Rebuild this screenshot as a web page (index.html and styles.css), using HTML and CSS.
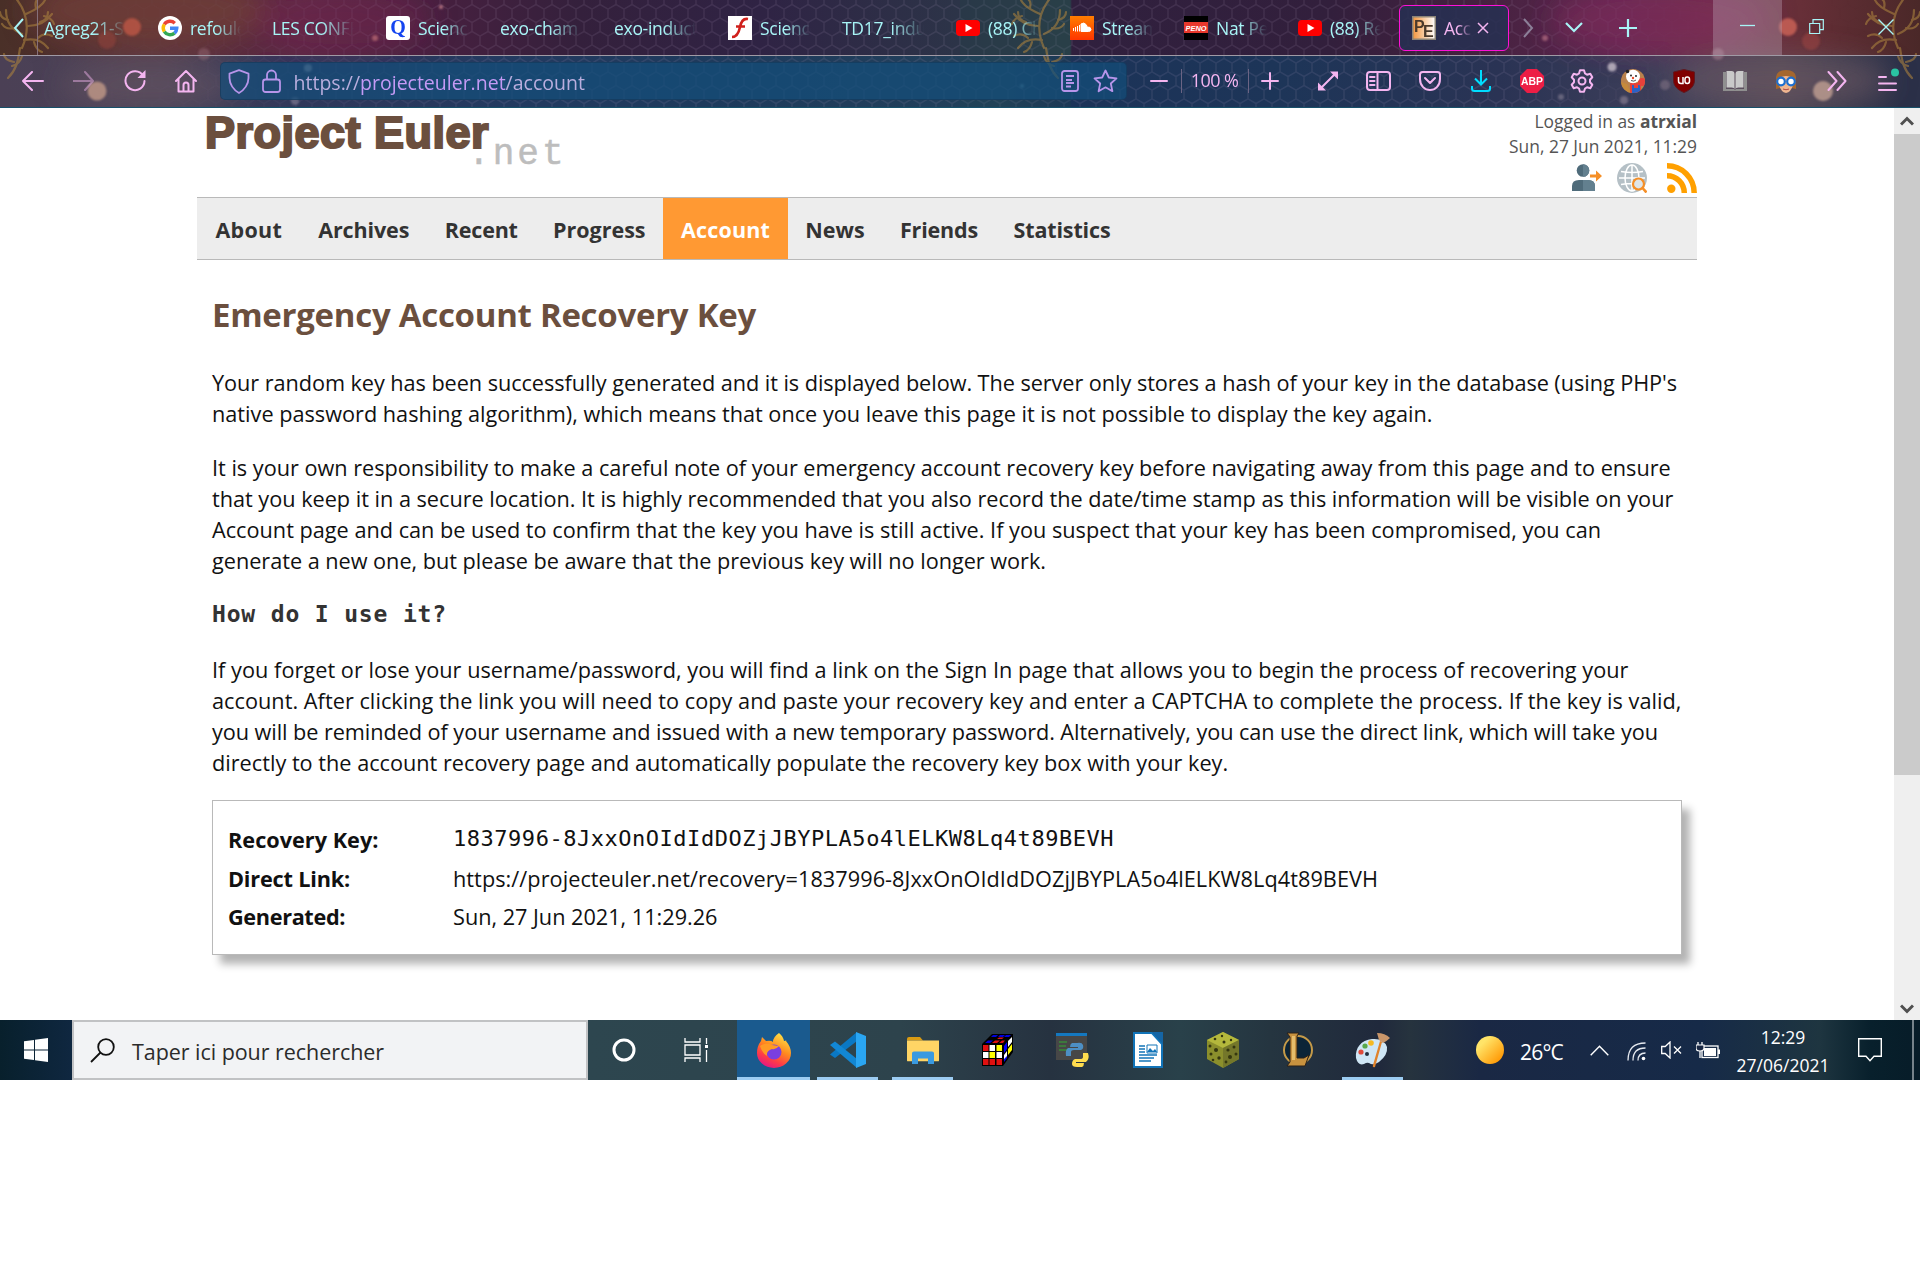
FILE: index.html
```html
<!DOCTYPE html>
<html lang="fr">
<head>
<meta charset="utf-8">
<title>Account - Project Euler</title>
<link rel="stylesheet" href="styles.css">
</head>
<body>
<header class="chrome">
  <svg class="theme" width="1920" height="108" viewBox="0 0 1920 108" aria-hidden="true">
    <defs>
      <pattern id="hex" width="16" height="27" patternUnits="userSpaceOnUse">
        <path d="M8 0v4.500l8 4.500v9l-8 4.500V27M8 4.500L0 9v9l8 4.500" fill="none" stroke="#b9a5c8" stroke-width="1.500"/>
      </pattern>
      <linearGradient id="fadeHex"><stop offset="0" stop-color="#000"/><stop offset=".1" stop-color="#333"/><stop offset=".25" stop-color="#fff"/><stop offset=".78" stop-color="#fff"/><stop offset=".87" stop-color="#222"/><stop offset="1" stop-color="#000"/></linearGradient>
      <mask id="hexMask"><rect width="1920" height="108" fill="url(#fadeHex)"/></mask>
      <filter id="soft" x="-50%" y="-50%" width="200%" height="200%"><feGaussianBlur stdDeviation="1.200"/></filter>
      <filter id="haze" x="-50%" y="-50%" width="200%" height="200%"><feGaussianBlur stdDeviation="14"/></filter>
      <g id="vine" fill="none" stroke="#a9803f" stroke-width="2.200" stroke-linecap="round" opacity=".6">
        <path d="M14-4C28 12 30 30 22 48M26 14C40 8 46 2 46-4M28 26c10 0 18-4 24-12M24 40c10-2 18 0 24 8M22 34C12 30 6 22 6 10M20 48c-2 14-4 22-12 30"/>
        <path d="M36 8q-2-8 4-10M40 22q8-2 8-10M38 38q6-6 14-2M8 20q-8-2-8-8M14 28q-8 2-12-4M34 42q2 8 8 10M12 66q8-2 10-10M14 62q-10-2-10-8M44 16q8 2 10 8"/>
      </g>
    </defs>
    <g filter="url(#haze)">
      <ellipse cx="150" cy="10" rx="120" ry="40" fill="#70403a" opacity=".8"/>
      <ellipse cx="340" cy="20" rx="90" ry="34" fill="#75204f" opacity=".45"/>
      <ellipse cx="1660" cy="20" rx="110" ry="34" fill="#8a2c5c" opacity=".5"/>
      <ellipse cx="1780" cy="80" rx="110" ry="26" fill="#6d5862" opacity=".6"/>
      <ellipse cx="150" cy="85" rx="90" ry="24" fill="#6a5560" opacity=".55"/>
    </g>
    <rect width="1920" height="108" fill="url(#hex)" mask="url(#hexMask)" opacity=".12"/>
    <rect x="960" width="111" height="108" fill="#1d4a4a" opacity=".2"/>
    <g filter="url(#soft)">
      <circle cx="132" cy="27" r="9" fill="#c45a48" opacity=".75"/><circle cx="107" cy="40" r="9" fill="#a0453a" opacity=".45"/>
      <circle cx="97" cy="91" r="9.500" fill="#c39a88" opacity=".8"/><circle cx="308" cy="68" r="4" fill="#b9b0c0" opacity=".7"/>
      <circle cx="204" cy="54" r="6" fill="#a0707c" opacity=".4"/><circle cx="295" cy="101" r="4" fill="#9a8fa5" opacity=".5"/>
      <circle cx="375" cy="38" r="3" fill="#d07a80" opacity=".6"/><circle cx="441" cy="7" r="2" fill="#d08a90" opacity=".8"/>
      <circle cx="1022" cy="86" r="2" fill="#86b0c8" opacity=".6"/>
      <circle cx="1788" cy="27" r="9" fill="#c96256" opacity=".85"/><circle cx="1811" cy="41" r="9" fill="#a4463f" opacity=".5"/>
      <circle cx="1823" cy="91" r="10" fill="#bb9b8f" opacity=".85"/><circle cx="1612" cy="67" r="4.500" fill="#c9bfca" opacity=".8"/>
      <circle cx="1665" cy="85" r="5" fill="#8c7a8c" opacity=".5"/><circle cx="1624" cy="100" r="4" fill="#a293a5" opacity=".5"/>
      <circle cx="1718" cy="54" r="6" fill="#b08595" opacity=".5"/><circle cx="1545" cy="38" r="3" fill="#c87f90" opacity=".6"/>
      <circle cx="1561" cy="97" r="3" fill="#b3a7b5" opacity=".4"/>
    </g>
    <use href="#vine"/>
    <use href="#vine" transform="translate(1920) scale(-1 1)"/>
    <use href="#vine" transform="translate(1066) scale(-1 1)"/>
    <rect x="1713" width="69" height="55" fill="#b9a0b4" opacity=".38"/>
  </svg>

  <div class="tabs">
    <span class="tab-scroll"><svg width="12" height="20" viewBox="0 0 12 20"><path d="M10 1L2 10l8 9" fill="none" stroke="#a8f5f7" stroke-width="2"/></svg></span>
    <span class="tab first"><b>Agreg21-S</b></span>
    <span class="tab"><svg width="24" height="24" viewBox="0 0 24 24"><circle cx="12" cy="12" r="12" fill="#fff"/><g fill="none" stroke-width="3.400"><path d="M6.300 8.400A6.800 6.800 0 0 1 16.800 7.200" stroke="#ea4335"/><path d="M6.300 15.600a6.800 6.800 0 0 1 0-7.200" stroke="#fbbc05"/><path d="M16.500 17.100A6.800 6.800 0 0 1 6.300 15.600" stroke="#34a853"/><path d="M12 12.200h6.800a6.800 6.800 0 0 1-2.300 4.900" stroke="#4285f4"/></g></svg><b>refoule</b></span>
    <span class="tab"><b>LES CONFE</b></span>
    <span class="tab"><svg width="24" height="24" viewBox="0 0 24 24"><rect width="24" height="24" rx="3" fill="#fff"/><text x="12" y="18" class="fav-q">Q</text></svg><b>Science</b></span>
    <span class="tab"><b>exo-cham</b></span>
    <span class="tab"><b>exo-induct</b></span>
    <span class="tab"><svg width="24" height="24" viewBox="0 0 24 24"><rect width="24" height="24" fill="#fff"/><path d="M20 3c-5-1-7 3-8 8S9 21 4 21M8 10.500h9" fill="none" stroke="#d0201c" stroke-width="2.600"/></svg><b>Science</b></span>
    <span class="tab"><b>TD17_indu</b></span>
    <span class="tab"><svg width="24" height="24" viewBox="0 0 24 24"><rect y="4" width="24" height="16" rx="4" fill="#f00"/><path d="M9.500 8l7 4-7 4z" fill="#fff"/></svg><b>(88) Ch</b></span>
    <span class="tab"><svg width="24" height="24" viewBox="0 0 24 24"><defs><linearGradient id="sc" x2="0" y2="1"><stop offset="0" stop-color="#ff7e00"/><stop offset="1" stop-color="#ff3500"/></linearGradient></defs><rect width="24" height="24" fill="url(#sc)"/><path d="M11 8q3-2.500 5.500 1l.5 2q4-.5 4 2.500 0 2-2.500 2H11zM9.500 9v6.500M7.500 10v5.500M5.500 11v4.500M3.500 12v3" fill="#fff" stroke="#fff" stroke-width="1"/></svg><b>Stream</b></span>
    <span class="tab"><svg width="24" height="24" viewBox="0 0 24 24"><rect width="24" height="24" fill="#000"/><rect y="6" width="24" height="11" fill="#e8382c"/><text x="12" y="15" class="fav-peno" textLength="21" lengthAdjust="spacingAndGlyphs">PENO</text></svg><b>Nat Pen</b></span>
    <span class="tab"><svg width="24" height="24" viewBox="0 0 24 24"><rect y="4" width="24" height="16" rx="4" fill="#f00"/><path d="M9.500 8l7 4-7 4z" fill="#fff"/></svg><b>(88) Re</b></span>
    <span class="tab active"><svg width="24" height="24" viewBox="0 0 24 24"><defs><linearGradient id="pe"><stop offset="0" stop-color="#f2963e"/><stop offset="1" stop-color="#fff"/></linearGradient></defs><rect x=".75" y=".75" width="22.500" height="22.500" fill="url(#pe)" stroke="#8c8578" stroke-width="1.500"/><text x="2" y="16" class="fav-pe">P</text><text x="11" y="21" class="fav-pe">E</text></svg><b>Acco</b><svg class="close" width="12" height="12" viewBox="0 0 12 12"><path d="M1 1l10 10M11 1L1 11" stroke="#f4b5f0" stroke-width="1.500"/></svg></span>
    <span class="tab-tool next"><svg width="12" height="20" viewBox="0 0 12 20"><path d="M2 1l8 9-8 9" fill="none" stroke="#8c7f98" stroke-width="2"/></svg></span>
    <span class="tab-tool list"><svg width="18" height="11" viewBox="0 0 18 11"><path d="M1 1l8 8 8-8" fill="none" stroke="#a8f5f7" stroke-width="2.200"/></svg></span>
    <span class="tab-tool plus"><svg width="18" height="18" viewBox="0 0 18 18"><path d="M9 0v18M0 9h18" stroke="#a8f5f7" stroke-width="2.200"/></svg></span>
    <span class="win"><svg width="15" height="15" viewBox="0 0 15 15"><path d="M0 6.500h15" stroke="#a8f5f7" stroke-width="1.300"/></svg></span>
    <span class="win"><svg width="15" height="15" viewBox="0 0 15 15"><path d="M.7 4.500h10v10h-10zM4 4.500V.7h10.300v10h-3.600" fill="none" stroke="#a8f5f7" stroke-width="1.200"/></svg></span>
    <span class="win"><svg width="16" height="16" viewBox="0 0 16 16"><path d="M.5.500l15 15M15.500.500l-15 15" stroke="#a8f5f7" stroke-width="1.400"/></svg></span>
  </div>

  <div class="toolbar">
    <span class="tool"><svg width="22" height="20" viewBox="0 0 22 20"><path d="M10 1L1 10l9 9M1 10h20" class="pink"/></svg></span>
    <span class="tool dim"><svg width="22" height="20" viewBox="0 0 22 20"><path d="M12 1l8 9-8 9M20 10H0" class="pink"/></svg></span>
    <span class="tool"><svg width="22" height="22" viewBox="0 0 22 22"><path d="M19 5.500A9.500 9.500 0 1 0 20.500 11" class="pink"/><path d="M21.500 0v8h-8z" fill="#f4b5f0"/></svg></span>
    <span class="tool"><svg width="22" height="24" viewBox="0 0 22 24"><path d="M1 12L11 2l10 10M3.500 10v12.500h15V10M8.500 22v-6q0-2.500 2.500-2.500t2.500 2.500v6" class="pink"/></svg></span>
    <div class="urlbar">
      <svg width="22" height="25" viewBox="0 0 22 25"><path d="M11 1.200l9.500 3.500V9c0 6-4 12-9.500 15C5.500 21 1.500 15 1.500 9V4.700z" class="violet"/></svg>
      <svg width="19" height="24" viewBox="0 0 19 24"><rect x="1" y="10.500" width="17" height="12.500" rx="2.500" class="violet"/><path d="M5 10.500V6a4.500 4.500 0 0 1 9 0v4.500" class="violet"/></svg>
      <span class="url">https://<i>projecteuler.net</i>/account</span>
      <svg width="18" height="22" viewBox="0 0 18 22"><rect x="1" y="1" width="16" height="20" rx="2.500" class="violet"/><path d="M5 6h8M5 10h6M5 13h8M5 16.500h5" class="violet"/></svg>
      <svg width="25" height="24" viewBox="0 0 25 24"><path d="M12.500 1.500l3.300 7 7.700.8-5.700 5.200 1.600 7.700-6.900-3.900-6.900 3.900 1.600-7.700L1.500 9.300l7.700-.8z" class="violet"/></svg>
    </div>
    <span class="zoom-btn zoom-out"><svg width="18" height="18" viewBox="0 0 18 18"><path d="M1 9h16" class="pink"/></svg></span>
    <span class="zoom-val">100 %</span>
    <span class="zoom-btn"><svg width="18" height="18" viewBox="0 0 18 18"><path d="M1 9h16M9 1v16" class="pink"/></svg></span>
    <span class="tool tool-first"><svg width="22" height="22" viewBox="0 0 22 22"><path d="M4 18L18 4" class="pink"/><path d="M13 1.500h8v8zM1 12.500v8h8z" fill="#f4b5f0"/></svg></span>
    <span class="tool"><svg width="25" height="20" viewBox="0 0 25 20"><rect x="1" y="1" width="23" height="18" rx="3" class="pink"/><path d="M11.500 1v18M4 6h4.500M4 10h4.500M4 14h4.500" class="pink"/></svg></span>
    <span class="tool"><svg width="22" height="20" viewBox="0 0 22 20"><path d="M3.500 1h15Q21 1 21 3.500V8c0 7-5 11-10 11S1 15 1 8V3.500Q1 1 3.500 1zM6 7l5 5 5-5" class="pink"/></svg></span>
    <span class="tool"><svg width="20" height="22" viewBox="0 0 20 22"><path d="M10 0v14M4 8.500l6 6 6-6M1 16v2.500Q1 21 3.500 21h13q2.500 0 2.500-2.500V16" fill="none" stroke="#00ddff" stroke-width="2"/></svg></span>
    <span class="tool"><svg width="24" height="24" viewBox="0 0 24 24"><path d="M7 0h10l7 7v10l-7 7H7l-7-7V7z" fill="#ed1e45"/><text x="12" y="16" class="abp" textLength="22" lengthAdjust="spacingAndGlyphs">ABP</text></svg></span>
    <span class="tool"><svg width="24" height="24" viewBox="0 0 24 24"><circle cx="12" cy="12" r="3.500" class="pink"/><path d="M10 1.200h4l1 3.300 2 1.200 3.300-.9 2 3.500-2.300 2.500v2.400l2.300 2.500-2 3.500-3.300-.9-2 1.200-1 3.300h-4l-1-3.300-2-1.200-3.300.9-2-3.500L4 13.200v-2.400L1.700 8.300l2-3.500 3.300.9 2-1.200z" class="pink"/></svg></span>
    <span class="tool"><svg width="24" height="24" viewBox="0 0 24 24"><defs><clipPath id="disc"><circle cx="12" cy="12" r="12"/></clipPath></defs><g clip-path="url(#disc)"><rect width="24" height="24" fill="#b9824c"/><path d="M0 24V13l6 2 4 9z" fill="#c58a3c"/><path d="M9 14h11v10H9z" fill="#e8413a"/><path d="M11 16h2v3h4v-3h2v8h-8z" fill="#2a62c8"/><circle cx="21" cy="13" r="4" fill="#e8413a"/></g><ellipse cx="12" cy="7.500" rx="7" ry="6.700" fill="#fff"/><circle cx="6.500" cy="2.500" r="1.800" fill="#222"/><circle cx="10" cy="6.500" r=".9" fill="#111"/><circle cx="15" cy="7" r=".9" fill="#111"/><circle cx="12" cy="9" r="1.200" fill="#e64a2a"/><path d="M10 11.500q3 1.500 5-.5" fill="none" stroke="#333" stroke-width=".8"/></svg></span>
    <span class="tool"><svg width="22" height="24" viewBox="0 0 22 24"><path d="M11 .500l10.500 2.500v8c0 6-4 10-10.500 12.500C4.500 21 .500 17 .500 11V3z" fill="#800000" stroke="#5d1a22"/><path d="M5.500 8v4q0 2.500 2.500 2.500h2V8" fill="none" stroke="#fff" stroke-width="1.500"/><rect x="12" y="8" width="4.500" height="6.500" rx="2.200" fill="none" stroke="#fff" stroke-width="1.500"/></svg></span>
    <span class="tool"><svg width="24" height="20" viewBox="0 0 24 20"><path d="M0 1h3v17h8l1 1 1-1h8V1h3v19H0z" fill="#8f8f8f"/><path d="M3.500 0h5q3 0 3 3v15.500q0-2-3-2h-5zM20.500 0h-5q-3 0-3 3v15.500q0-2 3-2h5z" fill="#c9c9c9"/></svg></span>
    <span class="tool"><svg width="22" height="24" viewBox="0 0 22 24"><path d="M1 20V8Q2 1 11 1t10 7v12l-4-1H5z" fill="#a5672e"/><path d="M4 9q7-4 14 0v7q-2 7-7 8-5-1-7-8z" fill="#f0b690"/><g fill="#fff" stroke="#1d6fd0" stroke-width="2.200"><circle cx="6" cy="12.500" r="3.800"/><circle cx="16" cy="12.500" r="3.800"/></g><path d="M8 20q3 1.500 6 0" stroke="#b0484a" fill="none"/></svg></span>
    <span class="tool"><svg width="20" height="20" viewBox="0 0 20 20"><path d="M1.500 1l8 9-8 9M10.500 1l8 9-8 9" class="pink"/></svg></span>
    <span class="tool"><svg width="22" height="26" viewBox="0 0 22 26"><path d="M2 9h7M2 15.500h17M2 22h17" class="pink"/><circle cx="18" cy="4.500" r="4" fill="#2ac3a2"/></svg></span>
  </div>
</header>

<div class="viewport">
  <main class="page">
    <div class="masthead">
      <div class="logo"><span class="logo-name">Project Euler</span><span class="logo-net">.net</span></div>
      <div class="session">
        <div>Logged in as <strong>atrxial</strong></div>
        <div>Sun, 27 Jun 2021, 11:29</div>
        <div class="session-icons">
          <svg width="30" height="30" viewBox="0 0 30 30"><circle cx="11" cy="7.500" r="6.300" fill="#4f6b7a"/><path d="M0 28v-5q0-6 7-6h9q7 0 7 6v5z" fill="#4f6b7a"/><path d="M11 1.200a6.300 6.300 0 0 1 0 12.600zM11 17h5q7 0 7 6v5H11z" fill="#63808f"/><path d="M18 11.500h6V7.500l6 5.500-6 5.500v-4h-6z" fill="#f58f27"/></svg>
          <svg width="30" height="30" viewBox="0 0 30 30"><circle cx="15" cy="15" r="15" fill="#b5c0c6"/><g fill="none" stroke="#fff" stroke-width="1.500"><path d="M15 2v26M2 15h26M4 8.500q11 2 22 0M4 21.500q11-2 22 0"/><ellipse cx="15" cy="15" rx="7" ry="13"/></g><circle cx="21.500" cy="21" r="5.500" fill="#dfe5e8" stroke="#f58f27" stroke-width="2.200"/><path d="M25.500 25l4 4.500" stroke="#f58f27" stroke-width="2.600"/></svg>
          <svg width="30" height="30" viewBox="0 0 30 30"><circle cx="4.300" cy="25.700" r="4.200" fill="#ffa000"/><path d="M0 12.700A17.300 17.300 0 0 1 17.300 30M0 2.800A27.200 27.200 0 0 1 27.200 30" fill="none" stroke="#ffa000" stroke-width="5.500"/></svg>
        </div>
      </div>
    </div>
    <nav class="menu">
      <a class="m1">About</a><a class="m2">Archives</a><a class="m3">Recent</a><a class="m4">Progress</a><a class="m5 current">Account</a><a class="m6">News</a><a class="m7">Friends</a><a class="m8">Statistics</a>
    </nav>
    <section class="content">
      <h2>Emergency Account Recovery Key</h2>
      <p><span class="t3">Your random key has been successfully generated and it is displayed below. The server only stores a hash of your key in the database (using PHP's</span><br>
      <span>native password hashing algorithm), which means that once you leave this page it is not possible to display the key again.</span></p>
      <p><span class="t1">It is your own responsibility to make a careful note of your emergency account recovery key before navigating away from this page and to ensure</span><br>
      <span class="t1">that you keep it in a secure location. It is highly recommended that you also record the date/time stamp as this information will be visible on your</span><br>
      <span>Account page and can be used to confirm that the key you have is still active. If you suspect that your key has been compromised, you can</span><br>
      <span class="t2">generate a new one, but please be aware that the previous key will no longer work.</span></p>
      <h3>How do I use it?</h3>
      <p><span class="w1">If you forget or lose your username/password, you will find a link on the Sign In page that allows you to begin the process of recovering your</span><br>
      <span class="w1">account. After clicking the link you will need to copy and paste your recovery key and enter a CAPTCHA to complete the process. If the key is valid,</span><br>
      <span class="t4">you will be reminded of your username and issued with a new temporary password. Alternatively, you can use the direct link, which will take you</span><br>
      <span>directly to the account recovery page and automatically populate the recovery key box with your key.</span></p>
      <dl class="key-box">
        <dt>Recovery Key:</dt><dd class="mono">1837996-8JxxOnOIdIdDOZjJBYPLA5o4lELKW8Lq4t89BEVH</dd>
        <dt class="t5">Direct Link:</dt><dd class="w2">https://projecteuler.net/recovery=1837996-8JxxOnOIdIdDOZjJBYPLA5o4lELKW8Lq4t89BEVH</dd>
        <dt class="t6">Generated:</dt><dd class="t1">Sun, 27 Jun 2021, 11:29.26</dd>
      </dl>
    </section>
  </main>
  <div class="scrollbar">
    <span class="arrow"><svg width="14" height="10" viewBox="0 0 14 10"><path d="M1 8.500l6-6 6 6" fill="none" stroke="#505050" stroke-width="3"/></svg></span>
    <span class="thumb"></span>
    <span class="arrow down"><svg width="14" height="10" viewBox="0 0 14 10"><path d="M1 1.500l6 6 6-6" fill="none" stroke="#505050" stroke-width="3"/></svg></span>
  </div>
</div>

<footer class="taskbar">
  <span class="start"><svg width="24" height="24" viewBox="0 0 24 24"><path d="M0 3.300L10 2v9.500H0zM11 1.800L24 0v11.500H11zM0 12.500h10V22L0 20.700zM11 12.500h13V24l-13-1.800z" fill="#fff"/></svg></span>
  <div class="search"><svg width="25" height="25" viewBox="0 0 25 25"><circle cx="16" cy="9" r="7.800" fill="none" stroke="#111" stroke-width="1.800"/><path d="M10.500 14.500L1 24" stroke="#111" stroke-width="1.800"/></svg><span>Taper ici pour rechercher</span></div>
  <span class="app sys"><svg width="24" height="24" viewBox="0 0 24 24"><circle cx="12" cy="12" r="10" fill="none" stroke="#fff" stroke-width="3"/></svg></span>
  <span class="app sys2"><svg width="24" height="24" viewBox="0 0 24 24"><path d="M1 0v4h15V0M1 7h15v10H1zM1 24v-4h15v4M22.500 0v6M22.500 12v12" fill="none" stroke="#fff" stroke-width="1.300"/><rect x="21" y="7" width="3" height="3" fill="#fff"/></svg></span>
  <span class="app wide on"><svg width="36" height="36" viewBox="0 0 36 36"><defs><linearGradient id="ff" x1=".8" y1="0" x2=".3" y2="1"><stop offset="0" stop-color="#ffe94a"/><stop offset=".45" stop-color="#ff8a1e"/><stop offset=".75" stop-color="#ff3b47"/><stop offset="1" stop-color="#e31587"/></linearGradient></defs><path d="M23 1q4 3 5 8 3-1 2 0 5 6 5 12a17 15 0 0 1-34 0Q1 14 5 9l1-4q2 2 4 4 5-1 7 1 0-5 6-9z" fill="url(#ff)"/><circle cx="18" cy="20" r="7.500" fill="#7a3fe0"/><path d="M4 14q6-4 12-1l7 1q-3 4-7 3-6 2-5 7-5-3-7-10z" fill="#ff9a24"/></svg></span>
  <span class="app run"><svg width="36" height="36" viewBox="0 0 36 36"><path d="M27 0v9L5 26l-5-3.500z" fill="#0a78c4"/><path d="M0 13l5-3.500L27 27v9z" fill="#1287d4"/><path d="M26 0l10 4v28l-10 4z" fill="#2aa6f2"/></svg></span>
  <span class="app run"><svg width="32" height="27" viewBox="0 0 32 30" preserveAspectRatio="none"><path d="M0 2q0-2 2-2h11l3 4H0z" fill="#d99b13"/><path d="M0 4h32v22q0 1-1 1H1q-1 0-1-1z" fill="#ffd565"/><path d="M5 18q0-2 2-2h18q2 0 2 2v12h-6v-6H11v6H5z" fill="#3a9ae0"/></svg></span>
  <span class="app"><svg width="32" height="34" viewBox="0 0 32 34"><path d="M0 11L10 1h21v18L21 33H0z" fill="#000"/><g><path d="M1 12h5.500v6H1zM1 26h5.500v6H1zM7.500 26H13v6H7.500zM14.500 26H20v6h-5.500z" fill="#e01010"/><path d="M7.500 12H13v6H7.500zM1 19h5.500v6H1zM14.500 19H20v6h-5.500z" fill="#fff"/><path d="M14.500 12H20v6h-5.500zM7.500 19H13v6H7.500z" fill="#ff0"/><path d="M3 10l3-2.500h5L8 10zM11 2h5l-2 2H9zM18 2h5l-2 2h-5zM24 2h5l-2 2h-5z" fill="#00d"/><path d="M10 10l3-2.500h5L15 10zM15 6l2-1.500h5L20 6zM17 10l3-2.500h3L21 10z" fill="#e01010"/><path d="M22 13l3-4v7l-3 4zM22 29l3-4v-4l-3 4z" fill="#00f"/><path d="M26 8l4-4v5l-4 5zM22 22l3-4v5l-3 3z" fill="#fff"/><path d="M26 16l4-5v6l-4 5z" fill="#ff0"/></g></svg></span>
  <span class="app"><svg width="36" height="36" viewBox="0 0 36 36"><path d="M1 1h31v27H1z" fill="#474747"/><path d="M1 1h31v3H1z" fill="#1478c0"/><path d="M4 10h8M4 14h7M4 18h9" stroke="#3a8a3a" stroke-width="1.500"/><path d="M22 11h-5q-2 1-2 4h8v1H13q-3 2-2 8h5v-4q0-2 3-2h7q3-1 2-5-1-3-6-2z" fill="#4d8fc4"/><path d="M22 35h5q2-1 2-4h-8v-1h10q4-3 2-9h-5v4q0 2-3 2h-5q-3 1-3 5 0 3 5 3z" fill="#ffdc4e"/></svg></span>
  <span class="app"><svg width="30" height="36" viewBox="0 0 30 36"><path d="M1 1h18l10 11v23H1z" fill="#fff" stroke="#1274b8" stroke-width="2"/><path d="M19 0h11v12z" fill="#1565a5"/><path d="M6 14h6M6 17h6M6 20h6M6 23h18M6 26h15M6 29h12" stroke="#1274b8" stroke-width="1.500"/><path d="M14 13h10v8H14z" fill="none" stroke="#1274b8"/><path d="M14 20l3-4 3 3 2-2 2 3z" fill="#1274b8"/></svg></span>
  <span class="app"><svg width="34" height="36" viewBox="0 0 34 36"><path d="M17 0l16 8v19l-16 9-16-9V8z" fill="#8b8f2c"/><path d="M17 0l16 8-16 8L1 8z" fill="#b4b83c"/><path d="M17 16l16-8v19l-16 9z" fill="#74772a"/><g fill="#35370f"><circle cx="9" cy="7" r="1.300"/><circle cx="16" cy="4" r="1.200"/><circle cx="18" cy="10" r="1.500"/><circle cx="25" cy="8" r="1.200"/><circle cx="4" cy="14" r="1.500"/><circle cx="10" cy="18" r="2"/><circle cx="5" cy="22" r="1.500"/><circle cx="13" cy="26" r="1.700"/><circle cx="7" cy="28" r="1.300"/><circle cx="22" cy="18" r="1.600"/><circle cx="28" cy="15" r="1.500"/><circle cx="24" cy="25" r="2"/><circle cx="30" cy="22" r="1.500"/><circle cx="20" cy="30" r="1.400"/></g></svg></span>
  <span class="app"><svg width="32" height="36" viewBox="0 0 32 36"><circle cx="16" cy="18" r="14" fill="#0b2437" stroke="#c59a48" stroke-width="2"/><path d="M5 1h12l-2 3v22h7l5-3-4 11H5l3-4V5z" fill="#c8923f" stroke="#2a2018"/><path d="M10 4h3v24h-3z" fill="#e6bd6b"/></svg></span>
  <span class="app run"><svg width="36" height="36" viewBox="0 0 36 36"><path d="M17 7C6 8 0 16 1 26q2 8 8 6 3-2 5-1 4 3 10-1 9-7 8-15-3-9-15-8z" fill="#cfe6f5"/><circle cx="6" cy="20" r="2.600" fill="#e04a3a"/><circle cx="10" cy="14" r="2.600" fill="#58a84a"/><circle cx="16" cy="11" r="2.800" fill="#f5b921"/><circle cx="12" cy="22" r="2" fill="#223040"/><path d="M25 9l2 1-7 25q-3 1-2-2z" fill="#e0832c"/><path d="M22 1q8 0 13 5-3 3-7 5l-4-3z" fill="#c9966a"/></svg></span>
  <div class="tray">
    <svg width="28" height="28" viewBox="0 0 28 28"><defs><linearGradient id="sun" x1="0" y1="0" x2="1" y2="1"><stop offset=".25" stop-color="#ffe468"/><stop offset=".9" stop-color="#ff9500"/></linearGradient></defs><circle cx="14" cy="14" r="14" fill="url(#sun)"/></svg>
    <span class="temp">26°C</span>
    <svg class="up" width="19" height="11" viewBox="0 0 19 11"><path d="M.7 10.300L9.500 1.200l8.800 9.100" fill="none" stroke="#fff" stroke-width="1.400"/></svg>
    <svg class="wifi" width="19" height="19" viewBox="0 0 19 19"><g fill="none" stroke="#e6eaf0" stroke-width="1.300"><path d="M1 18.500Q1 1 18.500 1M6 18.500Q6 6 18.500 6M11 18.500q0-7.500 7.500-7.500" /></g><circle cx="16.500" cy="16.500" r="1.800" fill="#fff"/></svg>
    <svg class="vol" width="21" height="18" viewBox="0 0 21 18"><path d="M.7 5.500h3.500L9 1v16L4.200 12.500H.7zM13 5.500l7 7M20 5.500l-7 7" fill="none" stroke="#fff" stroke-width="1.300"/></svg>
    <svg class="bat" width="24" height="17" viewBox="0 0 24 17"><rect x="6" y="4" width="16" height="11.500" fill="none" stroke="#fff" stroke-width="1.300"/><path d="M8 6h12v8H8zM22 7.500h2v4.500h-2z" fill="#fff"/><path d="M0 3h8v3q0 3-4 3T0 6z" fill="#1a2844" stroke="#fff" stroke-width="1.200"/><path d="M2 0v3M6 0v3M4 9v7" stroke="#fff" stroke-width="1.300"/></svg>
    <div class="clock"><span>12:29</span><span>27/06/2021</span></div>
    <svg class="note" width="24" height="24" viewBox="0 0 24 24"><path d="M.7.700h22.600v17.500H16l-4 4.500-4-4.500H.7z" fill="none" stroke="#fff" stroke-width="1.400"/></svg>
    <span class="peek"></span>
  </div>
</footer>
</body>
</html>
```
FILE: styles.css
```css
* { box-sizing: border-box; }
body { margin: 0; background: #fff; font-family: "Open Sans", "Noto Sans", sans-serif; color: #111; width: 1920px; height: 1280px; overflow: hidden; }
svg { display: block; flex: none; }

/* Browser chrome */
.chrome { position: relative; height: 108px; border-bottom: 1px solid #17506a; overflow: hidden;
  background:
    linear-gradient(90deg, #4b4055 0, #4a4258 160px, #30375a 300px, #233a60 500px, #1e3a5c 700px, #22405a 1000px, #1c3358 1075px, #1d3558 1280px, #2a3354 1500px, #40405a 1680px, #514855 1780px, #2b3048 1900px) 0 56px / 100% 52px no-repeat,
    linear-gradient(90deg, #4a3028 0, #552c35 150px, #5a2844 300px, #45203f 450px, #34203c 580px, #2f2344 760px, #2c3448 960px, #2c3d48 1070px, #30203e 1072px, #321f3c 1330px, #45213f 1480px, #5d2850 1620px, #6a3048 1720px, #672f38 1800px, #4a2828 1920px) 0 0 / 100% 56px no-repeat; }
.theme { position: absolute; left: 0; top: 0; }
.tabs { position: relative; display: flex; align-items: center; height: 56px; border-bottom: 1px solid #a09aa5; }
.tab-scroll { width: 38px; height: 55px; border-right: 1px solid #86707a; display: flex; align-items: center; padding-left: 13px; flex: none; }
.tab { width: 114px; height: 55px; flex: none; display: flex; align-items: center; }
.tab.first { width: 120px; padding-left: 6px; }
.tab b { font-weight: 400; font-size: 17.500px; letter-spacing: -.3px; color: #a8f5f7; white-space: nowrap; overflow: hidden; width: 82px; line-height: 28px; -webkit-mask-image: linear-gradient(90deg, #000 60%, transparent 100%); mask-image: linear-gradient(90deg, #000 60%, transparent 100%); }
.tab svg + b { margin-left: 8px; width: 51px; -webkit-mask-image: linear-gradient(90deg, #000 50%, transparent 100%); mask-image: linear-gradient(90deg, #000 50%, transparent 100%); }
.tab.active { width: 110px; height: 46px; margin-left: -13px; padding-left: 12px; border: 1.500px solid #ff10d8; border-radius: 6px; background: rgba(38, 48, 82, .85); }
.tab.active b { color: #f4b5f0; width: 28px; }
.tab.active .close { margin-left: 5px; }
.tab-tool { display: flex; justify-content: center; flex: none; }
.tab-tool.next { width: 38px; }
.tab-tool.list { width: 54px; }
.tab-tool.plus { width: 54px; margin-right: 58px; }
.win { width: 69px; display: flex; justify-content: center; flex: none; padding-bottom: 2px; }

.pink { fill: none; stroke: #f4b5f0; stroke-width: 2; stroke-linecap: round; stroke-linejoin: round; }
.violet { fill: none; stroke: #b795ea; stroke-width: 1.800; stroke-linejoin: round; }
.toolbar { position: relative; display: flex; align-items: center; height: 50px; padding-left: 8px; }
.tool { width: 50.900px; display: flex; justify-content: center; flex: none; }
.tool.dim { opacity: .45; }
.urlbar { width: 907px; height: 38px; margin-left: 8px; border-radius: 5px; background: rgba(20, 78, 122, .72); border: 1px solid rgba(20, 50, 80, .5); display: flex; align-items: center; padding: 0 8px 0 7px; flex: none; }
.urlbar svg:nth-of-type(2) { margin-left: 12px; }
.urlbar svg:nth-of-type(4) { margin-left: 14px; }
.url { margin-left: 13px; margin-right: auto; font-size: 19.500px; line-height: 28px; color: #b9aede; padding-top: 3px; white-space: nowrap; }
.url i { font-style: normal; color: #c49af5; }
.zoom-btn { width: 43px; display: flex; justify-content: center; flex: none; }
.zoom-out { margin-left: 11px; }
.zoom-val { width: 68px; height: 24px; line-height: 23px; text-align: center; border: solid #6b6484; border-width: 0 1px; color: #f4b5f0; font-size: 18px; letter-spacing: -.6px; flex: none; }
.tool-first { margin-left: 11px; }

.fav-q { font: bold 20px "Liberation Serif", serif; fill: #1444f0; text-anchor: middle; }
.fav-peno { font: italic bold 8px "Liberation Sans", sans-serif; fill: #fff; text-anchor: middle; }
.fav-pe { font: bold 16px "Liberation Sans", sans-serif; fill: #4a3a2c; }
.abp { font: bold 11px "Liberation Sans", sans-serif; fill: #fff; text-anchor: middle; }

/* Web page */
.viewport { display: flex; height: 912px; }
.page { width: 1500px; margin-left: 197px; margin-right: auto; }
.masthead { display: flex; justify-content: space-between; height: 89px; }
.logo { display: flex; padding: 0 0 0 8px; color: #6b4f3e; }
.logo-name { font: bold 45px/50px "Liberation Sans", Arial, sans-serif; letter-spacing: .5px; -webkit-text-stroke: 2.200px #6b4f3e; white-space: nowrap; }
.logo-net { font: 36px/42px "Liberation Mono", monospace; letter-spacing: 3px; color: #bdbdbd; -webkit-text-stroke: .5px #bdbdbd; margin: 26px 0 0 -21px; }
.session { text-align: right; font-size: 17.400px; line-height: 25px; color: #555; padding-top: 1px; white-space: nowrap; }
.session-icons { display: flex; justify-content: flex-end; gap: 15px; margin-top: 4px; }
.session-icons svg:last-child { margin-left: 5px; }
.menu { display: flex; height: 63px; background: #ededed; border: solid #b9b9b9; border-width: 1px 0; font-weight: 700; font-size: 21.500px; line-height: 63px; color: #333; }
.menu a { display: flex; justify-content: center; flex: none; }
.m1 { width: 103.500px; letter-spacing: .3px; }
.m2 { width: 126.500px; letter-spacing: -.12px; }
.m3 { width: 108.500px; letter-spacing: -.18px; }
.m4 { width: 127.500px; }
.m5 { width: 125px; letter-spacing: .15px; }
.m6 { width: 94px; }
.m7 { width: 114px; letter-spacing: -.17px; }
.m8 { width: 132px; letter-spacing: -.14px; }
.menu .current { background: #ff9933; color: #fff; }

.content { padding: 0 15px; white-space: nowrap; }
.content h2 { margin: 33px 0 0; font-size: 33px; line-height: 44px; letter-spacing: -.28px; color: #6b4f3e; }
.content p { margin: 0; padding-top: 23px; font-size: 21.700px; line-height: 31px; }
.content h2 + p { padding-top: 30px; }
.content h3 { margin: 23px 0 0; font: bold 23px/31px "DejaVu Sans Mono", monospace; letter-spacing: .84px; color: #333; }
.content h3 + p { padding-top: 24px; }
.t1 { letter-spacing: -.015px; }
.t2 { letter-spacing: -.027px; }
.t3 { letter-spacing: -.06px; }
.t4 { letter-spacing: -.069px; }
.t5 { letter-spacing: -.19px; }
.t6 { letter-spacing: -.36px; }
.w1 { letter-spacing: .033px; }
.w2 { letter-spacing: .046px; }
.key-box { margin: 22px 0 0; height: 155px; border: 1px solid #b9b9b9; box-shadow: 8px 9px 8px rgba(0, 0, 0, .3); display: grid; grid-template-columns: 225px 1fr; grid-auto-rows: 38.500px; padding: 20px 15px; font-size: 21.700px; line-height: 38px; }
.key-box dt { font-weight: 700; }
.key-box dd { margin: 0; }
.key-box .mono { font: 22px/35px "DejaVu Sans Mono", monospace; letter-spacing: .526px; }

.scrollbar { width: 26px; background: #efefef; display: flex; flex-direction: column; }
.arrow { height: 26px; display: flex; align-items: center; justify-content: center; }
.thumb { height: 641px; background: #cbcbcb; }
.arrow.down { margin-top: auto; height: 22px; }

/* Desktop taskbar */
.taskbar { display: flex; align-items: center; height: 60px; color: #fff; background: linear-gradient(90deg, #08202c 0, #0f2740 72px, #2d464f 588px, #2d434c 900px, #263240 1050px, #29414a 1180px, #253540 1270px, #20293c 1380px, #26333e 1410px, #1a2844 1480px, #162a48 1700px, #1e3540 1820px, #08202c 1870px, #071c28 1920px); }
.start { width: 72px; display: flex; justify-content: center; flex: none; }
.search { width: 516px; height: 60px; background: #f2f3f5; border: 2px solid #c1c2c4; display: flex; align-items: center; padding-left: 16px; flex: none; font-size: 21.500px; letter-spacing: -.05px; color: #2b2b2b; line-height: 30px; }
.search span { margin: 3px 0 0 17px; }
.app { width: 61px; height: 60px; margin: 0 7px; display: flex; align-items: center; justify-content: center; flex: none; }
.app.sys { width: 71px; margin: 0; }
.app.sys2 { width: 73px; margin: 0 5px 0 0; }
.app.wide { width: 73px; margin: 0; background: #1a5a8e; }
.app.run, .app.on { border-bottom: 3px solid #9cccf2; padding-top: 3px; }
.tray { display: flex; align-items: center; flex: none; height: 60px; margin-left: auto; }
.temp { font-size: 21px; letter-spacing: -.8px; margin: 3px 0 0 16px; width: 52px; line-height: 28px; }
.up { margin-left: 18px; }
.wifi { margin-left: 18px; margin-top: 2px; }
.vol { margin-left: 15px; }
.bat { margin-left: 14px; }
.clock { width: 98px; margin-left: 14px; display: flex; flex-direction: column; align-items: center; font-size: 17.500px; line-height: 28px; padding-top: 1px; }
.note { margin-left: 26px; }
.peek { width: 8px; height: 60px; border-left: 2px solid #76828a; margin-left: 30px; }
```
